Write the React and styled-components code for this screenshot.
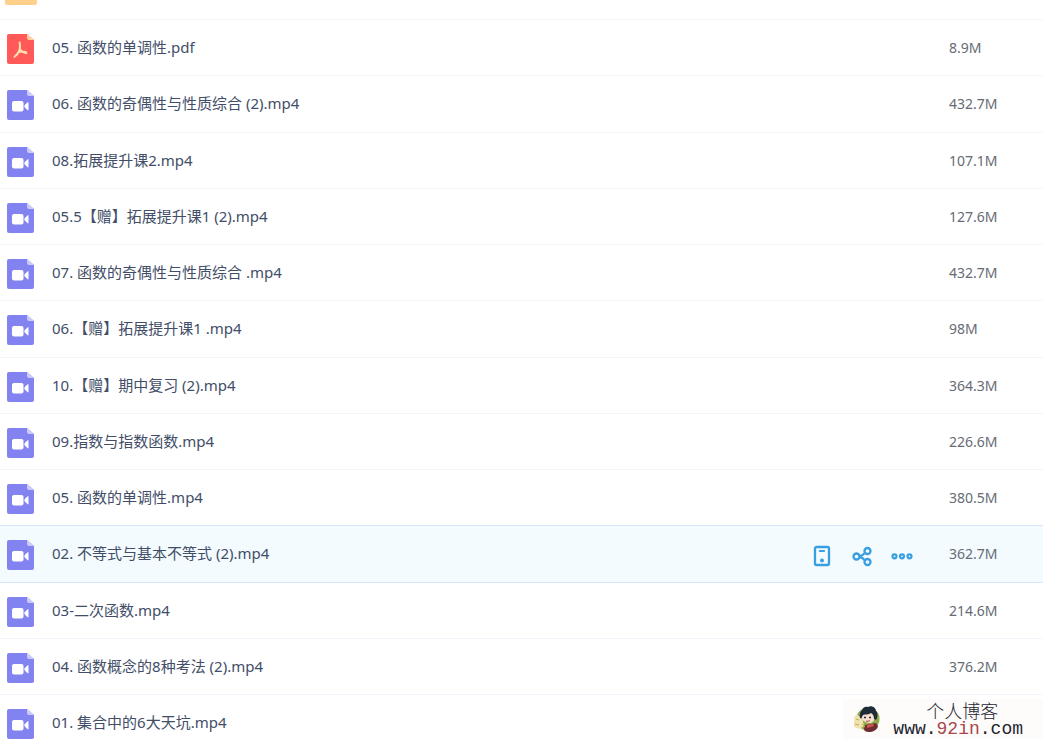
import React from "react";
import styled, { createGlobalStyle } from "styled-components";

const GlobalStyle = createGlobalStyle`
  * { box-sizing: border-box; }
  body {
    margin: 0;
    overflow: hidden;
    background: #fff;
    font-family: "Noto Sans", "Noto Sans CJK SC", sans-serif;
  }
`;

const Page = styled.main`
  position: relative;
  height: 100vh;
  overflow: hidden;
`;

/* The list is scrolled a little, so that its first row is cut off by the top edge. */
const FileTable = styled.table`
  width: 100%;
  margin-top: -36px;
  border-collapse: separate;
  border-spacing: 0;
  table-layout: fixed;
`;

const IconCol = styled.col`
  width: 52px;
`;

const ActionsCol = styled.col`
  width: 139px;
`;

const SizeCol = styled.col`
  width: 94px;
`;

const Cell = styled.td`
  height: 56px;
  padding: 0;
  border-bottom: 1px solid #f1f5fc;
  vertical-align: top;
  line-height: 24px;
  white-space: nowrap;
`;

const Row = styled.tr`
  background: ${(p) => (p.$active ? "#f3fbff" : "#fff")};

  &:nth-child(4n + 3) ${Cell} {
    height: 57px;
  }

  ${Cell} {
    ${(p) => (p.$active || p.$beforeActive ? "border-bottom-color: #d8e6fb;" : "")}
  }
`;

const IconCell = styled(Cell)`
  padding: 14px 0 0 7px;

  svg {
    display: block;
  }
`;

const FolderCell = styled(IconCell)`
  padding-left: 5px;
`;

const NameCell = styled(Cell)`
  padding-top: 15px;
  color: #424e67;
  font-size: 15px;
`;

const ActionsCell = styled(Cell)`
  padding-top: 18px;
`;

const SizeCell = styled(Cell)`
  padding-top: 16px;
  color: #666b75;
  font-size: 14px;
`;

const Actions = styled.div`
  display: flex;
  align-items: center;
  gap: 16px;
`;

const ActionButton = styled.button`
  display: flex;
  width: 24px;
  height: 24px;
  padding: 0;
  border: 0;
  background: none;
  color: #3a9fe0;
  cursor: pointer;
`;

const Watermark = styled.aside`
  position: absolute;
  right: 0;
  bottom: 3px;
  display: flex;
  align-items: center;
  gap: 12px;
  height: 40px;
  padding: 0 20px 0 10px;
  background: #fdfcfb;
`;

const WatermarkText = styled.div`
  display: flex;
  flex-direction: column;
  align-items: center;
  color: #1e2430;
`;

const BlogName = styled.span`
  padding-left: 8px;
  font-family: "Noto Sans CJK SC", sans-serif;
  font-size: 18px;
  font-weight: 300;
  line-height: 20px;
`;

const BlogAddress = styled.span`
  font-family: "Liberation Mono", monospace;
  font-size: 18px;
  line-height: 18px;
`;

const Accent = styled.span`
  color: #a8474b;
`;

function FolderIcon() {
  return (
    <svg width="32" height="27" viewBox="0 0 32 27" aria-hidden="true">
      <path d="M0 3a3 3 0 0 1 3-3h9l3 4h14a3 3 0 0 1 3 3v18a2 2 0 0 1-2 2H2a2 2 0 0 1-2-2z" fill="#ffd08c" />
    </svg>
  );
}

function PdfIcon() {
  return (
    <svg width="27" height="30" viewBox="0 0 27 30" aria-hidden="true">
      <path d="M2 0h18l7 6v22a2 2 0 0 1-2 2H2a2 2 0 0 1-2-2V2a2 2 0 0 1 2-2z" fill="#ff5958" />
      <path d="M20 0l7 6h-5a2 2 0 0 1-2-2z" fill="#ffd09c" />
      <path
        d="M12.700 8.600c.5 3 .5 4.700-.2 7.200-1 2.900-2.800 5.400-5 7M13 15.300c1.400 2.200 3.400 3.500 6.200 3.900M10.800 18.600c2.400-1 5.500-1.500 8.400-.2"
        fill="none"
        stroke="#ffe0ac"
        strokeWidth="2"
        strokeLinecap="round"
      />
    </svg>
  );
}

function VideoIcon() {
  return (
    <svg width="27" height="30" viewBox="0 0 27 30" aria-hidden="true">
      <path d="M2 0h18l7 6v22a2 2 0 0 1-2 2H2a2 2 0 0 1-2-2V2a2 2 0 0 1 2-2z" fill="#8283f0" />
      <path d="M20 0l7 6h-5a2 2 0 0 1-2-2z" fill="#cbccfb" />
      <rect x="5" y="11" width="11.500" height="10.500" rx="2" fill="#fff" />
      <path d="M17.500 15.200l3.200-3a.5.5 0 0 1 .8.400v7.300a.5.5 0 0 1-.8.400l-3.200-3z" fill="#fff" />
    </svg>
  );
}

function PhoneIcon() {
  return (
    <svg width="24" height="24" viewBox="0 0 24 24" fill="none" stroke="currentColor" strokeWidth="2.300" aria-hidden="true">
      <rect x="5" y="3" width="14" height="18" rx="1.500" />
      <path d="M9.800 7h4.400" strokeWidth="2" strokeLinecap="round" />
      <circle cx="12" cy="16.600" r="2" fill="currentColor" stroke="none" />
    </svg>
  );
}

function ShareIcon() {
  return (
    <svg width="24" height="24" viewBox="0 0 24 24" fill="none" stroke="currentColor" strokeWidth="2.300" aria-hidden="true">
      <circle cx="6.500" cy="12.500" r="3" />
      <circle cx="17.500" cy="7" r="3" />
      <circle cx="17.500" cy="18" r="3" />
      <path d="M9.600 12.200c2-.3 3.900-1.400 5-3.200M9.600 13c2 .3 3.700 1.300 4.900 3.200" />
    </svg>
  );
}

function MoreIcon() {
  return (
    <svg width="24" height="24" viewBox="0 0 24 24" fill="none" stroke="currentColor" strokeWidth="2.200" aria-hidden="true">
      <circle cx="4.500" cy="12.300" r="2" />
      <circle cx="12" cy="12.300" r="2" />
      <circle cx="19.500" cy="12.300" r="2" />
    </svg>
  );
}

function Portrait() {
  return (
    <svg width="28" height="28" viewBox="0 0 28 28" aria-hidden="true">
      <circle cx="15" cy="14" r="11.500" fill="#8faa4b" />
      <path d="M1 18c0-4 0-8 3-8l5 2 2 9-5 3-5-2z" fill="#efe3ae" />
      <path d="M8 10c0-3 2-4 3-4l11 1c1 4 0 10-5 11-5 0-9-3-9-8z" fill="#f7dfcf" />
      <path d="M7 9c0-2 1-3 2-4 1-3 4-4 6-3 4-2 8 1 8 4 2 2 2 6 0 9l-2-1c0-3-1-5-3-6-2 2-6 1-8 2l-2 4c-1-1-2-3-1-5z" fill="#202b3a" />
      <path d="M11 12.500h2M16 12.500h2" stroke="#26303c" strokeWidth="1.500" />
      <path d="M13 16q2 1 4-.5" fill="none" stroke="#b34a3f" />
      <path d="M12 20l11-2 2 3c-1 4-5 6-9 6-3 0-5-1-5-3z" fill="#702d31" />
      <path d="M14 20l6-1 1 2-7 2z" fill="#ce5650" />
      <path d="M3 14l3 1M2 19l4 1M9 19l3 3" stroke="#c5a85d" />
    </svg>
  );
}

const files = [
  { name: "05. 函数的单调性.pdf", size: "8.9M", pdf: true },
  { name: "06. 函数的奇偶性与性质综合 (2).mp4", size: "432.7M" },
  { name: "08.拓展提升课2.mp4", size: "107.1M" },
  { name: "05.5【赠】拓展提升课1 (2).mp4", size: "127.6M" },
  { name: "07. 函数的奇偶性与性质综合 .mp4", size: "432.7M" },
  { name: "06.【赠】拓展提升课1 .mp4", size: "98M" },
  { name: "10.【赠】期中复习 (2).mp4", size: "364.3M" },
  { name: "09.指数与指数函数.mp4", size: "226.6M" },
  { name: "05. 函数的单调性.mp4", size: "380.5M" },
  { name: "02. 不等式与基本不等式 (2).mp4", size: "362.7M", active: true },
  { name: "03-二次函数.mp4", size: "214.6M" },
  { name: "04. 函数概念的8种考法 (2).mp4", size: "376.2M" },
  { name: "01. 集合中的6大天坑.mp4" },
];

function RowActions() {
  return (
    <Actions>
      <ActionButton type="button"><PhoneIcon /></ActionButton>
      <ActionButton type="button"><ShareIcon /></ActionButton>
      <ActionButton type="button"><MoreIcon /></ActionButton>
    </Actions>
  );
}

export default function App() {
  return (
    <Page>
      <GlobalStyle />
      <FileTable>
        <colgroup>
          <IconCol />
          <col />
          <ActionsCol />
          <SizeCol />
        </colgroup>
        <tbody>
          <Row>
            <FolderCell><FolderIcon /></FolderCell>
            <Cell colSpan={3} />
          </Row>
          {files.map((file, i) => (
            <Row key={file.name} $active={file.active} $beforeActive={files[i + 1]?.active}>
              <IconCell>{file.pdf ? <PdfIcon /> : <VideoIcon />}</IconCell>
              <NameCell>{file.name}</NameCell>
              <ActionsCell>{file.active && <RowActions />}</ActionsCell>
              <SizeCell>{file.size}</SizeCell>
            </Row>
          ))}
        </tbody>
      </FileTable>
      <Watermark>
        <Portrait />
        <WatermarkText>
          <BlogName>个人博客</BlogName>
          <BlogAddress>www.<Accent>92in</Accent>.com</BlogAddress>
        </WatermarkText>
      </Watermark>
    </Page>
  );
}
